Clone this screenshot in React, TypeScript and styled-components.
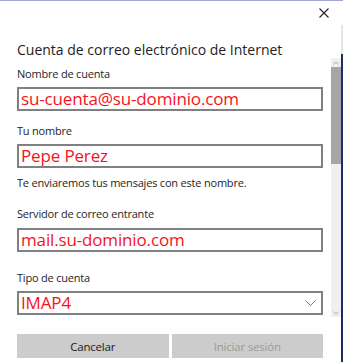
import React from "react";
import styled, { createGlobalStyle } from "styled-components";

const GlobalStyle = createGlobalStyle`
  html, body { margin: 0; padding: 0; background: #fff; }
  body { font-family: "Open Sans", "Noto Sans", sans-serif; }
`;

const Window = styled.div`
  width: 343px;
  height: 362px;
  box-sizing: border-box;
  border-top: 1px solid #a3a8d2;
  background: #fff;
  display: flex;
  flex-direction: column;
  overflow: hidden;
`;

const TitleBar = styled.div`
  height: 24px;
  display: flex;
  justify-content: flex-end;
  align-items: center;
  padding-right: 13px;
  flex-shrink: 0;
`;

const CloseButton = styled.button`
  width: 12px;
  height: 12px;
  padding: 0;
  border: none;
  background: transparent;
  display: flex;
  align-items: center;
  justify-content: center;
`;

const Body = styled.div`
  flex: 1;
  display: grid;
  grid-template-columns: 1fr 10px 2px;
`;

const Main = styled.div`
  padding-left: 17px;
  padding-right: 8px;
  display: flex;
  flex-direction: column;
`;

const Title = styled.h1`
  margin: 15px 0 0;
  font-size: 14px;
  line-height: 20px;
  font-weight: 400;
  color: #1e1e1e;
`;

const Label = styled.div<{ $top: number }>`
  margin-top: ${(p) => p.$top}px;
  font-size: 11px;
  letter-spacing: -0.2px;
  line-height: 16px;
  color: #1e1e1e;
`;

const Input = styled.div<{ $top: number }>`
  margin-top: ${(p) => p.$top}px;
  height: 24px;
  box-sizing: border-box;
  border: 2px solid #808080;
  padding: 0 2px;
  display: flex;
  align-items: center;
  justify-content: space-between;
  font-size: 17px;
  letter-spacing: -0.15px;
  line-height: 20px;
  color: #f5131b;
`;

const Buttons = styled.div`
  margin-top: 19px;
  display: grid;
  grid-template-columns: 1fr 1fr;
  gap: 3px;
`;

const Button = styled.button<{ $disabled?: boolean }>`
  height: 24px;
  border: none;
  background: #cccccc;
  font-family: inherit;
  font-size: 11.5px;
  letter-spacing: -0.2px;
  color: ${(p) => (p.$disabled ? "#9b9b9b" : "#1a1a1a")};
  padding: 0;
`;

const ScrollRail = styled.div`
  margin-top: 33px;
  height: 259px;
  background: #f0f0f0;
  display: flex;
  flex-direction: column;
  align-items: center;
`;

const ScrollArrow = styled.div`
  height: 9px;
  width: 100%;
  display: flex;
  align-items: center;
  justify-content: center;
`;

const Thumb = styled.div`
  width: 100%;
  height: 97px;
  background: #a6a6a6;
`;

const Spacer = styled.div`
  flex: 1;
`;

const Edge = styled.div`
  display: flex;
  flex-direction: column;
`;

const EdgeTop = styled.div`
  height: 29px;
  background: #e4e4e4;
`;

const EdgeBottom = styled.div`
  flex: 1;
  background: #1d2b66;
`;

const Chevron = ({ up, size = 6 }: { up?: boolean; size?: number }) => (
  <svg width={size} height={size / 2 + 1} viewBox="0 0 8 5">
    <path
      d={up ? "M0.5 4.5 L4 1 L7.5 4.5" : "M0.5 0.5 L4 4 L7.5 0.5"}
      fill="none"
      stroke="#8a8a8a"
      strokeWidth="1"
    />
  </svg>
);

export default function App() {
  return (
    <>
      <GlobalStyle />
      <Window>
        <TitleBar>
          <CloseButton aria-label="Cerrar">
            <svg width="10" height="10" viewBox="0 0 10 10">
              <path d="M0.5 0.5 L9.5 9.5 M9.5 0.5 L0.5 9.5" stroke="#222" strokeWidth="1.1" />
            </svg>
          </CloseButton>
        </TitleBar>
        <Body>
          <Main>
            <Title>Cuenta de correo electrónico de Internet</Title>
            <Label $top={6}>Nombre de cuenta</Label>
            <Input $top={5}>su-cuenta@su-dominio.com</Input>
            <Label $top={12}>Tu nombre</Label>
            <Input $top={5}>Pepe Perez</Input>
            <Label $top={7}>Te enviaremos tus mensajes con este nombre.</Label>
            <Label $top={15}>Servidor de correo entrante</Label>
            <Input $top={6}>mail.su-dominio.com</Input>
            <Label $top={18}>Tipo de cuenta</Label>
            <Input $top={5}>
              <span>IMAP4</span>
              <svg width="11" height="7" viewBox="0 0 11 7" style={{ marginRight: 3 }}>
                <path d="M0.5 0.5 L5.5 5.5 L10.5 0.5" fill="none" stroke="#7a7a7a" strokeWidth="1" />
              </svg>
            </Input>
            <Buttons>
              <Button>Cancelar</Button>
              <Button $disabled>Iniciar sesión</Button>
            </Buttons>
          </Main>
          <ScrollRail>
            <ScrollArrow>
              <Chevron up />
            </ScrollArrow>
            <Thumb />
            <Spacer />
            <ScrollArrow>
              <Chevron />
            </ScrollArrow>
          </ScrollRail>
          <Edge>
            <EdgeTop />
            <EdgeBottom />
          </Edge>
        </Body>
      </Window>
    </>
  );
}
